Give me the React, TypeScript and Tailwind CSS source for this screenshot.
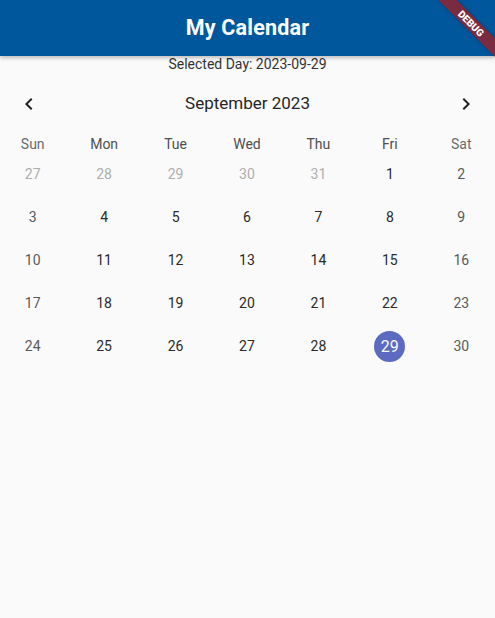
const days = ["Sun", "Mon", "Tue", "Wed", "Thu", "Fri", "Sat"];

type Cell = { day: number; outside?: boolean };

const weeks: Cell[][] = [
  [{ day: 27, outside: true }, { day: 28, outside: true }, { day: 29, outside: true }, { day: 30, outside: true }, { day: 31, outside: true }, { day: 1 }, { day: 2 }],
  [3, 4, 5, 6, 7, 8, 9].map((d) => ({ day: d })),
  [10, 11, 12, 13, 14, 15, 16].map((d) => ({ day: d })),
  [17, 18, 19, 20, 21, 22, 23].map((d) => ({ day: d })),
  [24, 25, 26, 27, 28, 29, 30].map((d) => ({ day: d })),
];

const selected = 29;

function ChevronLeft() {
  return (
    <svg width="24" height="24" viewBox="0 0 24 24" fill="#212121">
      <path d="M15.41 7.41L14 6l-6 6 6 6 1.41-1.41L10.83 12z" />
    </svg>
  );
}

function ChevronRight() {
  return (
    <svg width="24" height="24" viewBox="0 0 24 24" fill="#212121">
      <path d="M10 6L8.59 7.41 13.17 12l-4.58 4.59L10 18l6-6z" />
    </svg>
  );
}

export default function App() {
  return (
    <div className="relative w-[495px] h-[618px] overflow-hidden bg-[#fafafa] font-['Roboto',sans-serif]">
      {/* App bar */}
      <header className="relative z-10 h-[56px] bg-[#01579b] flex items-center justify-center shadow-[0_2px_4px_rgba(0,0,0,0.25)]">
        <h1 className="text-white text-[21.5px] font-bold tracking-[0.2px]">My Calendar</h1>
      </header>

      <p className="text-center text-[14px] leading-[16px] text-[#333333]">Selected Day: 2023-09-29</p>

      {/* Header */}
      <div className="mt-[8px] h-[48px] flex items-center justify-between px-[17px]">
        <ChevronLeft />
        <span className="text-[17px] text-[#262626]">September 2023</span>
        <ChevronRight />
      </div>

      <div className="-ml-[3px] -mr-[2px]">
        {/* Days of week */}
        <div className="mt-[6px] h-[19px] grid grid-cols-7">
          {days.map((d, i) => (
            <div
              key={d}
              className={`flex items-center justify-center text-[14px] ${
                i === 0 || i === 6 ? "text-[#6a6a6a]" : "text-[#4f4f4f]"
              }`}
            >
              {d}
            </div>
          ))}
        </div>

        {/* Days grid */}
        {weeks.map((week, wi) => (
          <div key={wi} className="h-[43px] grid grid-cols-7">
            {week.map((c, i) => {
              const isSel = !c.outside && c.day === selected;
              const weekend = i === 0 || i === 6;
              return (
                <div key={i} className="flex items-center justify-center">
                  {isSel ? (
                    <div className="w-[31px] h-[31px] rounded-full bg-[#5c6bc0] flex items-center justify-center text-[16px] text-[#fafafa]">
                      {c.day}
                    </div>
                  ) : (
                    <span
                      className={`text-[14px] ${
                        c.outside ? "text-[#aeaeae]" : weekend ? "text-[#5a5a5a]" : "text-[#2a2a2a]"
                      }`}
                    >
                      {c.day}
                    </span>
                  )}
                </div>
              );
            })}
          </div>
        ))}
      </div>

      {/* Debug banner */}
      <div className="absolute z-20 left-[430px] top-[17px] w-[82px] h-[13px] rotate-45 bg-[#7b2b40] shadow-[0_0_3px_rgba(0,0,0,0.3)] flex items-center justify-center">
        <span className="text-white text-[10px] leading-none font-black">DEBUG</span>
      </div>
    </div>
  );
}
